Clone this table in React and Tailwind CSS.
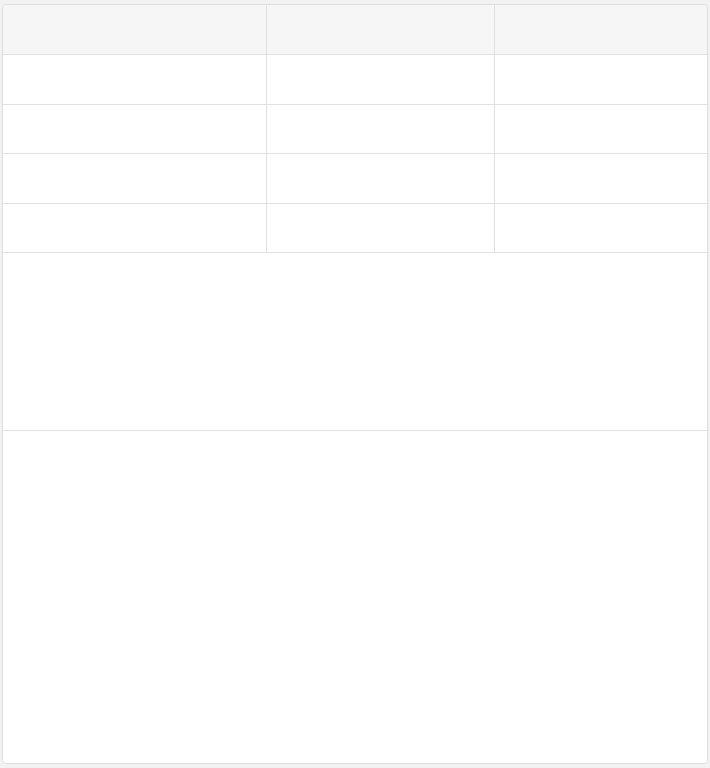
const rows = [49, 49, 48, 49, 48];
const cols = ['w-[264px]', 'w-[228px]', 'flex-1'];

export default function App() {
  return (
    <div className="min-h-screen bg-[#f2f2f2] pt-[4px] pl-[2px]" style={{ fontFamily: '"Liberation Sans", sans-serif' }}>
      <div className="w-[706px] h-[760px] flex flex-col rounded-[4px] border border-[#dedede] bg-white overflow-hidden">
        {/* table */}
        <div className="flex flex-col">
          {rows.map((h, r) => (
            <div
              key={r}
              className={`flex border-b border-[#e0e0e0] ${r === 0 ? 'bg-[#f6f6f6]' : 'bg-white'}`}
              style={{ height: h + 1 }}
            >
              {cols.map((c, i) => (
                <div key={i} className={`${c} h-full ${i < 2 ? 'border-r border-[#e0e0e0]' : ''}`} />
              ))}
            </div>
          ))}
        </div>

        {/* empty area */}
        <div className="h-[177px]" />

        {/* lower panel */}
        <div className="flex-1 border-t border-[#e0e0e0] bg-white rounded-b-[4px]" />
      </div>
    </div>
  );
}
